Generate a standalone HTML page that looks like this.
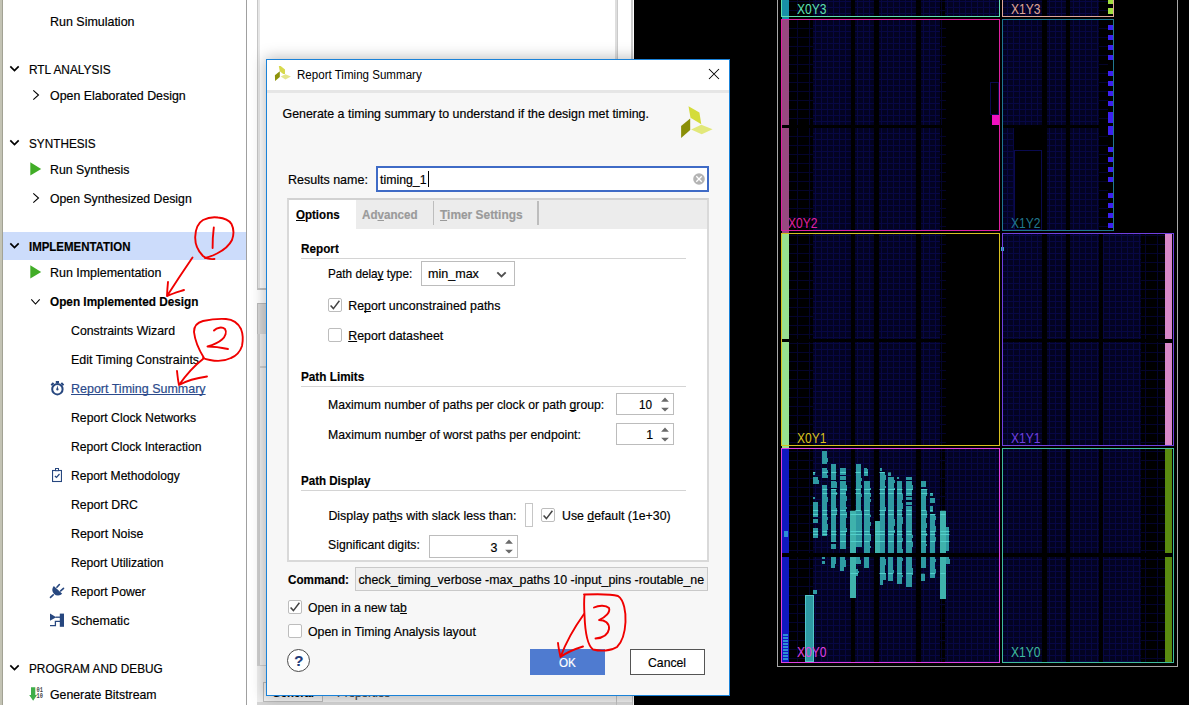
<!DOCTYPE html>
<html><head><meta charset="utf-8"><title>Report Timing Summary</title>
<style>
html,body{margin:0;padding:0}
body{width:1189px;height:705px;overflow:hidden;position:relative;background:#fff;font-family:"Liberation Sans",Arial,sans-serif;}
.t{position:absolute;white-space:nowrap;line-height:16px;-webkit-text-stroke:0.18px currentColor;}
.a{position:absolute}
span.t{text-decoration-skip-ink:none}
u{text-decoration:underline;text-decoration-skip-ink:none;text-underline-offset:1px;text-decoration-thickness:1px}
.cb{position:absolute;width:12px;height:12px;border:1px solid #bdbdbd;border-radius:2px;background:#fff}
.sp{position:absolute;border:1px solid #bcbcbc;background:#fff;box-sizing:border-box}
.hl{position:absolute;height:1px;background:#d4d4d4}
</style></head><body>

<div class="a" style="left:0;top:0;width:2px;height:705px;background:#c3c3b4"></div>
<div class="a" style="left:2px;top:0;width:1px;height:705px;background:#a2a294"></div>
<div class="a" style="left:246px;top:0;width:1px;height:705px;background:#a0a0a0"></div>
<div class="a" style="left:3px;top:232px;width:243px;height:28px;background:#ccdcfb"></div>
<span class="t" style="left:29px;top:62px;font-size:12.4px;font-weight:400;color:#000;transform:scaleX(0.9581);transform-origin:0 0;">RTL ANALYSIS</span>
<svg class="a" style="left:9px;top:64.5px" width="11" height="7" viewBox="-1 -1 11 7"><path d="M0.3 0.3 L4.5 4.5 L8.7 0.3" fill="none" stroke="#000" stroke-width="1.7"/></svg>
<span class="t" style="left:29px;top:136px;font-size:12.4px;font-weight:400;color:#000;transform:scaleX(0.9497);transform-origin:0 0;">SYNTHESIS</span>
<svg class="a" style="left:9px;top:138.5px" width="11" height="7" viewBox="-1 -1 11 7"><path d="M0.3 0.3 L4.5 4.5 L8.7 0.3" fill="none" stroke="#000" stroke-width="1.7"/></svg>
<span class="t" style="left:29px;top:239px;font-size:12.4px;font-weight:700;color:#000;transform:scaleX(0.9246);transform-origin:0 0;">IMPLEMENTATION</span>
<svg class="a" style="left:9px;top:241.5px" width="11" height="7" viewBox="-1 -1 11 7"><path d="M0.3 0.3 L4.5 4.5 L8.7 0.3" fill="none" stroke="#000" stroke-width="1.7"/></svg>
<span class="t" style="left:29px;top:661px;font-size:12.4px;font-weight:400;color:#000;transform:scaleX(0.9519);transform-origin:0 0;">PROGRAM AND DEBUG</span>
<svg class="a" style="left:9px;top:663.5px" width="11" height="7" viewBox="-1 -1 11 7"><path d="M0.3 0.3 L4.5 4.5 L8.7 0.3" fill="none" stroke="#000" stroke-width="1.7"/></svg>
<span class="t" style="left:50px;top:14px;font-size:12.4px;font-weight:400;color:#000;transform:scaleX(1.0056);transform-origin:0 0;">Run Simulation</span>
<span class="t" style="left:50px;top:88px;font-size:12.4px;font-weight:400;color:#000;">Open Elaborated Design</span>
<svg class="a" style="left:31.5px;top:89px" width="8" height="12" viewBox="-1 -1 8 12"><path d="M0.3 0.3 L5.5 5.0 L0.3 9.7" fill="none" stroke="#000" stroke-width="1.1"/></svg>
<span class="t" style="left:50px;top:162px;font-size:12.4px;font-weight:400;color:#000;transform:scaleX(0.9937);transform-origin:0 0;">Run Synthesis</span>
<svg class="a" style="left:30px;top:162px" width="12" height="14" viewBox="0 0 12 14"><path d="M0.3 0.2 L11.2 6.9 L0.3 13.6 Z" fill="#41ad27"/></svg>
<span class="t" style="left:50px;top:191px;font-size:12.4px;font-weight:400;color:#000;transform:scaleX(0.9890);transform-origin:0 0;">Open Synthesized Design</span>
<svg class="a" style="left:31.5px;top:192px" width="8" height="12" viewBox="-1 -1 8 12"><path d="M0.3 0.3 L5.5 5.0 L0.3 9.7" fill="none" stroke="#000" stroke-width="1.1"/></svg>
<span class="t" style="left:50px;top:265px;font-size:12.4px;font-weight:400;color:#000;transform:scaleX(1.0046);transform-origin:0 0;">Run Implementation</span>
<svg class="a" style="left:30px;top:265px" width="12" height="14" viewBox="0 0 12 14"><path d="M0.3 0.2 L11.2 6.9 L0.3 13.6 Z" fill="#41ad27"/></svg>
<span class="t" style="left:50px;top:294px;font-size:12.4px;font-weight:700;color:#000;transform:scaleX(0.9501);transform-origin:0 0;">Open Implemented Design</span>
<svg class="a" style="left:30px;top:298px" width="11" height="7.5" viewBox="-1 -1 11 7.5"><path d="M0.3 0.3 L4.5 5.0 L8.7 0.3" fill="none" stroke="#000" stroke-width="1.1"/></svg>
<span class="t" style="left:50px;top:687px;font-size:12.4px;font-weight:400;color:#000;transform:scaleX(0.9922);transform-origin:0 0;">Generate Bitstream</span>
<span class="t" style="left:71px;top:323px;font-size:12.4px;font-weight:400;color:#000;transform:scaleX(0.9936);transform-origin:0 0;">Constraints Wizard</span>
<span class="t" style="left:71px;top:352px;font-size:12.4px;font-weight:400;color:#000;transform:scaleX(1.0054);transform-origin:0 0;">Edit Timing Constraints</span>
<span class="t" style="left:71px;top:410px;font-size:12.4px;font-weight:400;color:#000;transform:scaleX(0.9873);transform-origin:0 0;">Report Clock Networks</span>
<span class="t" style="left:71px;top:439px;font-size:12.4px;font-weight:400;color:#000;transform:scaleX(0.9818);transform-origin:0 0;">Report Clock Interaction</span>
<span class="t" style="left:71px;top:468px;font-size:12.4px;font-weight:400;color:#000;transform:scaleX(0.9741);transform-origin:0 0;">Report Methodology</span>
<span class="t" style="left:71px;top:497px;font-size:12.4px;font-weight:400;color:#000;transform:scaleX(0.9913);transform-origin:0 0;">Report DRC</span>
<span class="t" style="left:71px;top:526px;font-size:12.4px;font-weight:400;color:#000;">Report Noise</span>
<span class="t" style="left:71px;top:555px;font-size:12.4px;font-weight:400;color:#000;transform:scaleX(0.9792);transform-origin:0 0;">Report Utilization</span>
<span class="t" style="left:71px;top:584px;font-size:12.4px;font-weight:400;color:#000;transform:scaleX(0.9859);transform-origin:0 0;">Report Power</span>
<span class="t" style="left:71px;top:613px;font-size:12.4px;font-weight:400;color:#000;transform:scaleX(1.0093);transform-origin:0 0;">Schematic</span>
<span class="t" style="left:71px;top:381px;font-size:12.4px;font-weight:400;color:#2b4a8b;transform:scaleX(1.0075);transform-origin:0 0;text-decoration:underline;text-underline-offset:1px;text-decoration-thickness:1px;">Report Timing Summary</span>
<svg class="a" style="left:50px;top:381px" width="15" height="15" viewBox="0 0 15 15">
<circle cx="7.4" cy="8.2" r="5.2" fill="none" stroke="#27477f" stroke-width="2"/>
<rect x="5.8" y="0" width="3.2" height="2.2" fill="#27477f"/>
<path d="M0.6 3.6 L2.8 1.2 L4.2 2.6 L2.0 5.0 Z M14.2 3.6 L12.0 1.2 L10.6 2.6 L12.8 5.0 Z" fill="#27477f"/>
<path d="M7.4 4.2 L8.3 8.6 L6.5 8.6 Z" fill="#27477f"/><circle cx="7.4" cy="8.4" r="1.1" fill="#27477f"/>
</svg>
<svg class="a" style="left:51px;top:467px" width="13" height="16" viewBox="0 0 13 16">
<rect x="1.55" y="3.5" width="8.9" height="11" fill="none" stroke="#27477f" stroke-width="1.1"/>
<rect x="4.5" y="1.5" width="3" height="2.2" fill="#fff" stroke="#27477f" stroke-width="1"/>
<path d="M3.9 9.0 L5.5 10.5 L8.5 7.0" fill="none" stroke="#27477f" stroke-width="1.2"/>
</svg>
<svg class="a" style="left:49px;top:583px" width="17" height="16" viewBox="0 0 17 16">
<path d="M4.8 2.9 L13.2 10.7 A5.73 5.73 0 0 1 4.8 2.9 Z" fill="#27477f"/>
<path d="M7.9 4.2 L10.4 1.5 M11.7 7.9 L14.5 5.4" stroke="#27477f" stroke-width="1.6" stroke-linecap="round"/>
<path d="M4.2 11.8 L1.5 14.4" stroke="#27477f" stroke-width="1.6" stroke-linecap="round"/>
</svg>
<svg class="a" style="left:50px;top:613px" width="15" height="15" viewBox="0 0 15 15">
<path d="M0 0.6 L6.2 4.2 L0 7.8 Z" fill="#27477f"/>
<rect x="9.8" y="0.6" width="4.2" height="13.2" fill="#27477f"/>
<path d="M5.6 4.2 H10" stroke="#27477f" stroke-width="1.3" fill="none"/>
<path d="M10 8.4 H5.4 V12.6 H0" stroke="#27477f" stroke-width="1.3" fill="none"/>
</svg>
<svg class="a" style="left:28px;top:686px" width="17" height="16" viewBox="0 0 17 16">
<path d="M3 1.2 H7.3 V9 H9 L5.15 14.8 L1.2 9 H3 Z" fill="#3fae49"/>
<text x="8.6" y="5.6" font-family="Liberation Mono,monospace" font-size="7.6" font-weight="700" fill="#444" textLength="6.4" lengthAdjust="spacingAndGlyphs">01</text>
<text x="8.6" y="11.9" font-family="Liberation Mono,monospace" font-size="7.6" font-weight="700" fill="#444" textLength="6.4" lengthAdjust="spacingAndGlyphs">10</text>
</svg>
<div class="a" style="left:257px;top:0;width:1px;height:705px;background:#c6c6c6"></div>
<div class="a" style="left:258px;top:0;width:2px;height:705px;background:#e6e6e6"></div>
<div class="a" style="left:615px;top:0;width:2px;height:705px;background:#dedede"></div>
<div class="a" style="left:617px;top:0;width:1px;height:705px;background:#cacaca"></div>
<div class="a" style="left:631px;top:0;width:2px;height:705px;background:#cbcbcb"></div>
<div class="a" style="left:257px;top:288px;width:12px;height:2px;background:#c4c4c4"></div>
<div class="a" style="left:257px;top:290px;width:12px;height:13px;background:#fff"></div>
<div class="a" style="left:257px;top:303px;width:12px;height:31px;background:#d8d8d8;border-top:1px solid #bcbcbc;border-left:1px solid #bcbcbc;box-sizing:border-box"></div>
<div class="a" style="left:257px;top:334px;width:3px;height:371px;background:#cfcfcf"></div>
<div class="a" style="left:260px;top:334px;width:8px;height:371px;background:#efefef"></div>
<div class="a" style="left:260px;top:366px;width:8px;height:2px;background:#cfcfcf"></div>
<div class="a" style="left:257px;top:665px;width:10px;height:1px;background:#d0d0d0"></div>
<div class="a" style="left:260px;top:678px;width:4px;height:1px;background:#555"></div>
<div class="a" style="left:257px;top:666px;width:376px;height:39px;background:#efefef"></div>
<div class="a" style="left:257px;top:702px;width:376px;height:3px;background:#d6d6d6"></div>
<div class="a" style="left:263px;top:682px;width:60px;height:20px;box-sizing:border-box;border:1px solid #bdbdbd;background:#f4f4f4"></div>
<span class="t" style="left:272px;top:685px;font-size:12.4px;font-weight:700;color:#000;transform:scaleX(0.9100);transform-origin:0 0;">General</span>
<span class="t" style="left:336.6px;top:685px;font-size:12.4px;font-weight:400;color:#444;transform:scaleX(0.9383);transform-origin:0 0;">Properties</span>
<div class="a" style="left:616px;top:690px;width:1px;height:15px;background:#c0c0c0"></div>
<div class="a" style="left:632px;top:690px;width:1px;height:15px;background:#c0c0c0"></div>
<svg class="a" style="left:634px;top:0" width="555" height="705" viewBox="634 0 555 705" shape-rendering="crispEdges">
<defs>
<pattern id="g" x="5" y="1" width="6" height="6" patternUnits="userSpaceOnUse"><rect width="6" height="6" fill="#030322"/><rect width="1" height="6" fill="#070744"/><rect width="6" height="1" fill="#070744"/></pattern>
<pattern id="gd" x="5" y="1" width="12" height="9" patternUnits="userSpaceOnUse"><rect width="12" height="9" fill="#000"/><rect width="1" height="9" fill="#04042c"/><rect width="12" height="1" fill="#04042c"/></pattern>
</defs>
<rect x="634" y="0" width="555" height="705" fill="#000"/>
<path d="M777.5 0 V666.5 H1177.5 V0" fill="none" stroke="#a8a8a8" stroke-width="1"/>
<rect x="789" y="0" width="24" height="17" fill="url(#gd)"/>
<rect x="940" y="0" width="6" height="17" fill="url(#gd)"/>
<rect x="813" y="0" width="38" height="17" fill="url(#g)"/>
<rect x="855" y="0" width="19" height="17" fill="url(#g)"/>
<rect x="879" y="0" width="36.5" height="17" fill="url(#g)"/>
<rect x="921" y="0" width="19" height="17" fill="url(#g)"/>
<rect x="945" y="0" width="54" height="17" fill="url(#g)"/>
<rect x="1003" y="0" width="39" height="17" fill="url(#g)"/>
<rect x="1047" y="0" width="19" height="17" fill="url(#g)"/>
<rect x="1070" y="0" width="28.5" height="17" fill="url(#g)"/>
<rect x="1098.5" y="0" width="9.5" height="17" fill="url(#gd)"/>
<rect x="789" y="20" width="24" height="105" fill="url(#gd)"/>
<rect x="940" y="20" width="6" height="105" fill="url(#gd)"/>
<rect x="813" y="20" width="38" height="105" fill="url(#g)"/>
<rect x="855" y="20" width="19" height="105" fill="url(#g)"/>
<rect x="879" y="20" width="36.5" height="105" fill="url(#g)"/>
<rect x="921" y="20" width="19" height="105" fill="url(#g)"/>
<rect x="1003" y="20" width="39" height="105" fill="url(#g)"/>
<rect x="1047" y="20" width="19" height="105" fill="url(#g)"/>
<rect x="1070" y="20" width="28.5" height="105" fill="url(#g)"/>
<rect x="1098.5" y="20" width="9.5" height="105" fill="url(#gd)"/>
<rect x="789" y="128" width="24" height="102" fill="url(#gd)"/>
<rect x="940" y="128" width="6" height="102" fill="url(#gd)"/>
<rect x="813" y="128" width="38" height="102" fill="url(#g)"/>
<rect x="855" y="128" width="19" height="102" fill="url(#g)"/>
<rect x="879" y="128" width="36.5" height="102" fill="url(#g)"/>
<rect x="921" y="128" width="19" height="102" fill="url(#g)"/>
<rect x="1003" y="128" width="11" height="102" fill="url(#g)"/>
<rect x="1047" y="128" width="19" height="102" fill="url(#g)"/>
<rect x="1070" y="128" width="28.5" height="102" fill="url(#g)"/>
<rect x="1098.5" y="128" width="9.5" height="102" fill="url(#gd)"/>
<rect x="789" y="234" width="24" height="105" fill="url(#gd)"/>
<rect x="940" y="234" width="6" height="105" fill="url(#gd)"/>
<rect x="813" y="234" width="38" height="105" fill="url(#g)"/>
<rect x="855" y="234" width="19" height="105" fill="url(#g)"/>
<rect x="879" y="234" width="36.5" height="105" fill="url(#g)"/>
<rect x="921" y="234" width="19" height="105" fill="url(#g)"/>
<rect x="1003" y="234" width="39" height="105" fill="url(#g)"/>
<rect x="1047" y="234" width="19" height="105" fill="url(#g)"/>
<rect x="1070" y="234" width="28.5" height="105" fill="url(#g)"/>
<rect x="1103" y="234" width="37.5" height="105" fill="url(#g)"/>
<rect x="1141" y="234" width="24" height="105" fill="url(#gd)"/>
<rect x="789" y="342" width="24" height="103" fill="url(#gd)"/>
<rect x="940" y="342" width="6" height="103" fill="url(#gd)"/>
<rect x="813" y="342" width="38" height="103" fill="url(#g)"/>
<rect x="855" y="342" width="19" height="103" fill="url(#g)"/>
<rect x="879" y="342" width="36.5" height="103" fill="url(#g)"/>
<rect x="921" y="342" width="19" height="103" fill="url(#g)"/>
<rect x="1003" y="342" width="39" height="103" fill="url(#g)"/>
<rect x="1047" y="342" width="19" height="103" fill="url(#g)"/>
<rect x="1070" y="342" width="28.5" height="103" fill="url(#g)"/>
<rect x="1103" y="342" width="37.5" height="103" fill="url(#g)"/>
<rect x="1141" y="342" width="24" height="103" fill="url(#gd)"/>
<rect x="789" y="449" width="24" height="104" fill="url(#gd)"/>
<rect x="940" y="449" width="6" height="104" fill="url(#gd)"/>
<rect x="813" y="449" width="38" height="104" fill="url(#g)"/>
<rect x="855" y="449" width="19" height="104" fill="url(#g)"/>
<rect x="879" y="449" width="36.5" height="104" fill="url(#g)"/>
<rect x="921" y="449" width="19" height="104" fill="url(#g)"/>
<rect x="945" y="449" width="54" height="104" fill="url(#g)"/>
<rect x="1003" y="449" width="39" height="104" fill="url(#g)"/>
<rect x="1047" y="449" width="19" height="104" fill="url(#g)"/>
<rect x="1070" y="449" width="28.5" height="104" fill="url(#g)"/>
<rect x="1103" y="449" width="37.5" height="104" fill="url(#g)"/>
<rect x="1141" y="449" width="24" height="104" fill="url(#gd)"/>
<rect x="789" y="557" width="24" height="105" fill="url(#gd)"/>
<rect x="940" y="557" width="6" height="105" fill="url(#gd)"/>
<rect x="813" y="557" width="38" height="105" fill="url(#g)"/>
<rect x="855" y="557" width="19" height="105" fill="url(#g)"/>
<rect x="879" y="557" width="36.5" height="105" fill="url(#g)"/>
<rect x="921" y="557" width="19" height="105" fill="url(#g)"/>
<rect x="945" y="557" width="54" height="105" fill="url(#g)"/>
<rect x="1003" y="557" width="39" height="105" fill="url(#g)"/>
<rect x="1047" y="557" width="19" height="105" fill="url(#g)"/>
<rect x="1070" y="557" width="28.5" height="105" fill="url(#g)"/>
<rect x="1103" y="557" width="37.5" height="105" fill="url(#g)"/>
<rect x="1141" y="557" width="24" height="105" fill="url(#gd)"/>
<rect x="1014.5" y="150.5" width="27" height="79" fill="#000" stroke="#0a0a50"/>
<rect x="990.5" y="82.5" width="8" height="32" fill="none" stroke="#0a0a50"/>
<rect x="782" y="0" width="7" height="19" fill="#1890a8"/>
<rect x="782" y="20" width="7" height="105" fill="#984880"/>
<rect x="782" y="128" width="7" height="105" fill="#984880"/>
<rect x="782" y="234" width="7" height="105" fill="#98e090"/>
<rect x="782" y="342" width="7" height="106" fill="#98e090"/>
<rect x="782" y="449" width="7" height="104" fill="#1018c0"/>
<rect x="782" y="557" width="7" height="105" fill="#1018c0"/>
<rect x="1108" y="0" width="5" height="4" fill="#a0e040"/>
<rect x="1108" y="8" width="5" height="6" fill="#a0e040"/>
<rect x="1108" y="25" width="5" height="5" fill="#3c20f0"/>
<rect x="1108" y="35" width="5" height="5" fill="#3c20f0"/>
<rect x="1108" y="45" width="5" height="5" fill="#3c20f0"/>
<rect x="1108" y="55" width="5" height="5" fill="#3c20f0"/>
<rect x="1108" y="71" width="5" height="5" fill="#3c20f0"/>
<rect x="1108" y="81" width="5" height="5" fill="#3c20f0"/>
<rect x="1108" y="91" width="5" height="5" fill="#3c20f0"/>
<rect x="1108" y="101" width="5" height="5" fill="#3c20f0"/>
<rect x="1108" y="112" width="5" height="11" fill="#3c20f0"/>
<rect x="1108" y="126" width="5" height="9" fill="#3c20f0"/>
<rect x="1108" y="147" width="5" height="5" fill="#3c20f0"/>
<rect x="1108" y="157" width="5" height="5" fill="#3c20f0"/>
<rect x="1108" y="167" width="5" height="5" fill="#3c20f0"/>
<rect x="1108" y="177" width="5" height="5" fill="#3c20f0"/>
<rect x="1108" y="193" width="5" height="5" fill="#3c20f0"/>
<rect x="1108" y="203" width="5" height="5" fill="#3c20f0"/>
<rect x="1108" y="213" width="5" height="5" fill="#3c20f0"/>
<rect x="1108" y="223" width="5" height="5" fill="#3c20f0"/>
<rect x="1165" y="234" width="7" height="105" fill="#d888c8"/>
<rect x="1165" y="343" width="7" height="102" fill="#d888c8"/>
<rect x="1165" y="449" width="7" height="104" fill="#5a8a10"/>
<rect x="1165" y="557" width="7" height="105" fill="#5a8a10"/>
<rect x="992" y="115" width="7" height="10" fill="#f010c0"/>
<rect x="1001" y="247" width="3" height="4" fill="#30b0c0"/>
<rect x="783" y="634" width="5" height="2" fill="#2c8cd8"/>
<rect x="783" y="637" width="5" height="2" fill="#2c8cd8"/>
<rect x="783" y="640" width="5" height="2" fill="#2c8cd8"/>
<rect x="783" y="643" width="5" height="2" fill="#2c8cd8"/>
<rect x="783" y="646" width="5" height="2" fill="#2c8cd8"/>
<rect x="783" y="649" width="5" height="2" fill="#2c8cd8"/>
<rect x="783" y="652" width="5" height="2" fill="#2c8cd8"/>
<rect x="783" y="655" width="5" height="2" fill="#2c8cd8"/>
<rect x="783" y="658" width="5" height="2" fill="#2c8cd8"/>
<rect x="784" y="531" width="4" height="6" fill="#2c8cd8"/>
<path d="M822.4 451.1H827.4V463.9H822.4ZM822.4 468.3H827.4V478.3H822.4ZM822.4 485.0H827.4V535.7H822.4ZM812.8 477.3H818.2V484.0H812.8ZM812.8 502.2H818.2V516.6H812.8ZM812.8 518.5H818.2V523.3H812.8ZM812.8 528.1H818.2V537.6H812.8ZM812.8 471.6H815.3V475.4H812.8ZM812.8 497.4H815.3V499.4H812.8ZM831.2 463.9H836.4V480.2H831.2ZM831.2 481.2H836.4V487.9H831.2ZM831.2 488.8H836.4V541.5H831.2ZM831.2 544.3H836.4V549.1H831.2ZM840.2 468.3H846.0V474.5H840.2ZM840.2 476.4H846.0V480.2H840.2ZM840.2 481.2H846.0V549.1H840.2ZM855.5 463.9H860.7V510.8H855.5ZM855.5 510.8H862.2V547.2H855.5ZM864.2 481.2H869.5V553.0H864.2ZM864.2 468.3H867.0V476.4H864.2ZM879.5 471.6H884.8V553.0H879.5ZM879.5 468.3H882.3V470.6H879.5ZM888.1 477.3H893.8V553.0H888.1ZM888.1 472.5H891.0V476.4H888.1ZM897.1 481.2H902.4V553.0H897.1ZM897.1 477.3H899.0V479.2H897.1ZM906.3 477.3H911.6V480.2H906.3ZM906.3 481.2H911.6V495.5H906.3ZM906.3 497.4H911.6V500.3H906.3ZM906.3 502.2H911.6V505.1H906.3ZM906.3 506.1H911.6V553.0H906.3ZM921.2 481.2H926.4V486.9H921.2ZM921.2 488.8H926.4V553.0H921.2ZM930.2 498.4H935.4V503.2H930.2ZM930.2 513.7H935.4V553.0H930.2ZM930.2 493.2H932.7V495.5H930.2ZM930.2 506.1H932.7V511.8H930.2ZM945.5 527.1H949.4V551.0H945.5ZM822.4 556.5H824.9V559.4H822.4ZM822.4 560.7H824.9V563.8H822.4ZM831.2 556.5H836.4V564.1H831.2ZM831.2 564.1H834.5V568.0H831.2ZM840.2 556.5H845.4V567.0H840.2ZM840.2 567.0H844.1V570.8H840.2ZM855.5 556.5H860.3V564.1H855.5ZM855.5 568.9H858.0V575.6H855.5ZM864.2 556.5H868.9V568.0H864.2ZM879.5 556.5H884.8V580.4H879.5ZM879.5 580.4H882.9V585.2H879.5ZM888.1 556.5H892.9V581.4H888.1ZM897.1 556.5H902.4V584.2H897.1ZM906.3 556.5H911.6V587.1H906.3ZM921.2 556.5H926.4V568.0H921.2ZM921.2 573.7H924.5V581.4H921.2ZM930.2 556.5H935.4V577.5H930.2ZM945.5 556.5H949.4V564.1H945.5ZM805.4 595.2H813.8V661.4H805.4ZM813.0 590.0H817.2V593.8H813.0ZM827.4 457.7H828.4V462.3H827.4ZM827.4 470.4H828.4V472.6H827.4ZM827.4 475.0H828.4V477.5H827.4ZM827.4 497.2H828.4V502.1H827.4ZM827.4 517.2H828.4V519.9H827.4ZM827.4 524.1H828.4V530.2H827.4ZM818.2 479.9H819.2V483.8H818.2ZM836.4 482.3H837.4V487.9H836.4ZM836.4 491.9H837.4V494.6H836.4ZM836.4 508.2H837.4V514.6H836.4ZM846.0 485.1H847.0V491.2H846.0ZM846.0 495.9H847.0V501.3H846.0ZM846.0 506.5H847.0V509.4H846.0ZM846.0 511.8H847.0V517.6H846.0ZM846.0 527.9H847.0V532.1H846.0ZM860.7 478.1H861.7V480.8H860.7ZM860.7 484.5H861.7V487.6H860.7ZM860.7 493.8H861.7V497.1H860.7ZM869.5 487.7H870.5V490.1H869.5ZM869.5 493.2H870.5V496.9H869.5ZM869.5 498.9H870.5V501.6H869.5ZM869.5 514.6H870.5V517.4H869.5ZM869.5 521.8H870.5V525.6H869.5ZM869.5 533.6H870.5V540.5H869.5ZM869.5 545.9H870.5V548.3H869.5ZM867.0 469.4H868.0V475.5H867.0ZM884.8 475.4H885.8V480.0H884.8ZM884.8 485.8H885.8V488.0H884.8ZM884.8 507.0H885.8V510.8H884.8ZM893.8 480.3H894.8V483.4H893.8ZM893.8 487.9H894.8V490.1H893.8ZM893.8 519.2H894.8V525.9H893.8ZM893.8 529.5H894.8V532.6H893.8ZM902.4 494.3H903.4V500.0H902.4ZM902.4 503.3H903.4V509.2H902.4ZM902.4 516.8H903.4V523.7H902.4ZM902.4 538.4H903.4V541.1H902.4ZM902.4 549.4H903.4V553.0H902.4ZM911.6 485.1H912.6V490.4H911.6ZM911.6 534.7H912.6V538.0H911.6ZM911.6 541.6H912.6V546.6H911.6ZM926.4 489.3H927.4V495.9H926.4ZM926.4 511.0H927.4V517.6H926.4ZM926.4 523.3H927.4V527.9H926.4ZM926.4 533.0H927.4V535.9H926.4ZM926.4 543.5H927.4V546.3H926.4ZM935.4 515.9H936.4V519.6H935.4ZM935.4 525.5H936.4V531.4H935.4ZM935.4 537.3H936.4V540.5H935.4ZM845.4 560.0H846.4V566.7H845.4ZM860.3 560.3H861.3V564.1H860.3ZM858.0 570.7H859.0V573.1H858.0ZM884.8 559.4H885.8V564.7H884.8ZM884.8 572.8H885.8V579.7H884.8ZM892.9 570.3H893.9V573.2H892.9ZM902.4 557.8H903.4V560.8H902.4ZM902.4 575.1H903.4V577.1H902.4ZM911.6 568.4H912.6V575.2H911.6ZM935.4 559.3H936.4V561.7H935.4ZM935.4 568.6H936.4V572.7H935.4ZM949.4 559.0H950.4V564.1H949.4Z" fill="#2e9aa2"/>
<path d="M850.4 510.8H855.5V553.0H850.4ZM875.3 521.4H879.5V553.0H875.3ZM940.4 510.8H945.5V553.0H940.4ZM850.4 557.4H855.5V598.2H850.4ZM940.4 557.4H945.5V598.6H940.4Z" fill="#3fb2ac"/>
<clipPath id="cb"><path d="M822.4 451.1H827.4V463.9H822.4ZM822.4 468.3H827.4V478.3H822.4ZM822.4 485.0H827.4V535.7H822.4ZM812.8 477.3H818.2V484.0H812.8ZM812.8 502.2H818.2V516.6H812.8ZM812.8 518.5H818.2V523.3H812.8ZM812.8 528.1H818.2V537.6H812.8ZM812.8 471.6H815.3V475.4H812.8ZM812.8 497.4H815.3V499.4H812.8ZM831.2 463.9H836.4V480.2H831.2ZM831.2 481.2H836.4V487.9H831.2ZM831.2 488.8H836.4V541.5H831.2ZM831.2 544.3H836.4V549.1H831.2ZM840.2 468.3H846.0V474.5H840.2ZM840.2 476.4H846.0V480.2H840.2ZM840.2 481.2H846.0V549.1H840.2ZM855.5 463.9H860.7V510.8H855.5ZM855.5 510.8H862.2V547.2H855.5ZM864.2 481.2H869.5V553.0H864.2ZM864.2 468.3H867.0V476.4H864.2ZM879.5 471.6H884.8V553.0H879.5ZM879.5 468.3H882.3V470.6H879.5ZM888.1 477.3H893.8V553.0H888.1ZM888.1 472.5H891.0V476.4H888.1ZM897.1 481.2H902.4V553.0H897.1ZM897.1 477.3H899.0V479.2H897.1ZM906.3 477.3H911.6V480.2H906.3ZM906.3 481.2H911.6V495.5H906.3ZM906.3 497.4H911.6V500.3H906.3ZM906.3 502.2H911.6V505.1H906.3ZM906.3 506.1H911.6V553.0H906.3ZM921.2 481.2H926.4V486.9H921.2ZM921.2 488.8H926.4V553.0H921.2ZM930.2 498.4H935.4V503.2H930.2ZM930.2 513.7H935.4V553.0H930.2ZM930.2 493.2H932.7V495.5H930.2ZM930.2 506.1H932.7V511.8H930.2ZM945.5 527.1H949.4V551.0H945.5ZM822.4 556.5H824.9V559.4H822.4ZM822.4 560.7H824.9V563.8H822.4ZM831.2 556.5H836.4V564.1H831.2ZM831.2 564.1H834.5V568.0H831.2ZM840.2 556.5H845.4V567.0H840.2ZM840.2 567.0H844.1V570.8H840.2ZM855.5 556.5H860.3V564.1H855.5ZM855.5 568.9H858.0V575.6H855.5ZM864.2 556.5H868.9V568.0H864.2ZM879.5 556.5H884.8V580.4H879.5ZM879.5 580.4H882.9V585.2H879.5ZM888.1 556.5H892.9V581.4H888.1ZM897.1 556.5H902.4V584.2H897.1ZM906.3 556.5H911.6V587.1H906.3ZM921.2 556.5H926.4V568.0H921.2ZM921.2 573.7H924.5V581.4H921.2ZM930.2 556.5H935.4V577.5H930.2ZM945.5 556.5H949.4V564.1H945.5ZM805.4 595.2H813.8V661.4H805.4ZM813.0 590.0H817.2V593.8H813.0ZM827.4 457.7H828.4V462.3H827.4ZM827.4 470.4H828.4V472.6H827.4ZM827.4 475.0H828.4V477.5H827.4ZM827.4 497.2H828.4V502.1H827.4ZM827.4 517.2H828.4V519.9H827.4ZM827.4 524.1H828.4V530.2H827.4ZM818.2 479.9H819.2V483.8H818.2ZM836.4 482.3H837.4V487.9H836.4ZM836.4 491.9H837.4V494.6H836.4ZM836.4 508.2H837.4V514.6H836.4ZM846.0 485.1H847.0V491.2H846.0ZM846.0 495.9H847.0V501.3H846.0ZM846.0 506.5H847.0V509.4H846.0ZM846.0 511.8H847.0V517.6H846.0ZM846.0 527.9H847.0V532.1H846.0ZM860.7 478.1H861.7V480.8H860.7ZM860.7 484.5H861.7V487.6H860.7ZM860.7 493.8H861.7V497.1H860.7ZM869.5 487.7H870.5V490.1H869.5ZM869.5 493.2H870.5V496.9H869.5ZM869.5 498.9H870.5V501.6H869.5ZM869.5 514.6H870.5V517.4H869.5ZM869.5 521.8H870.5V525.6H869.5ZM869.5 533.6H870.5V540.5H869.5ZM869.5 545.9H870.5V548.3H869.5ZM867.0 469.4H868.0V475.5H867.0ZM884.8 475.4H885.8V480.0H884.8ZM884.8 485.8H885.8V488.0H884.8ZM884.8 507.0H885.8V510.8H884.8ZM893.8 480.3H894.8V483.4H893.8ZM893.8 487.9H894.8V490.1H893.8ZM893.8 519.2H894.8V525.9H893.8ZM893.8 529.5H894.8V532.6H893.8ZM902.4 494.3H903.4V500.0H902.4ZM902.4 503.3H903.4V509.2H902.4ZM902.4 516.8H903.4V523.7H902.4ZM902.4 538.4H903.4V541.1H902.4ZM902.4 549.4H903.4V553.0H902.4ZM911.6 485.1H912.6V490.4H911.6ZM911.6 534.7H912.6V538.0H911.6ZM911.6 541.6H912.6V546.6H911.6ZM926.4 489.3H927.4V495.9H926.4ZM926.4 511.0H927.4V517.6H926.4ZM926.4 523.3H927.4V527.9H926.4ZM926.4 533.0H927.4V535.9H926.4ZM926.4 543.5H927.4V546.3H926.4ZM935.4 515.9H936.4V519.6H935.4ZM935.4 525.5H936.4V531.4H935.4ZM935.4 537.3H936.4V540.5H935.4ZM845.4 560.0H846.4V566.7H845.4ZM860.3 560.3H861.3V564.1H860.3ZM858.0 570.7H859.0V573.1H858.0ZM884.8 559.4H885.8V564.7H884.8ZM884.8 572.8H885.8V579.7H884.8ZM892.9 570.3H893.9V573.2H892.9ZM902.4 557.8H903.4V560.8H902.4ZM902.4 575.1H903.4V577.1H902.4ZM911.6 568.4H912.6V575.2H911.6ZM935.4 559.3H936.4V561.7H935.4ZM935.4 568.6H936.4V572.7H935.4ZM949.4 559.0H950.4V564.1H949.4ZM850.4 510.8H855.5V553.0H850.4ZM875.3 521.4H879.5V553.0H875.3ZM940.4 510.8H945.5V553.0H940.4ZM850.4 557.4H855.5V598.2H850.4ZM940.4 557.4H945.5V598.6H940.4Z"/></clipPath>
<path d="M813 472.5H952M813 489.5H952M813 493.5H952M813 510.5H952M813 514.5H952M813 531.5H952M813 534.5H952M813 541.5H952M813 573.5H952" stroke="#52d0cc" stroke-width="1" clip-path="url(#cb)" fill="none"/>
<rect x="805.5" y="595.5" width="8" height="66" fill="none" stroke="#52c8c8"/>
<rect x="781.5" y="-4.5" width="218" height="21" fill="none" stroke="#5fe0b0"/>
<rect x="1002.5" y="-4.5" width="111" height="21" fill="none" stroke="#e0a898"/>
<rect x="781.5" y="19.5" width="218" height="211" fill="none" stroke="#e020a0"/>
<rect x="1002.5" y="19.5" width="111" height="211" fill="none" stroke="#207890"/>
<rect x="781.5" y="233.5" width="218" height="212" fill="none" stroke="#d8c020"/>
<rect x="1002.5" y="233.5" width="171" height="212" fill="none" stroke="#7040e0"/>
<rect x="781.5" y="448.5" width="218" height="214" fill="none" stroke="#e040e0"/>
<rect x="1002.5" y="448.5" width="171" height="214" fill="none" stroke="#3fbc9c"/>
<text x="797" y="14" font-family="Liberation Sans,Arial,sans-serif" font-size="14.4" fill="#5fe0b0" textLength="29.5" lengthAdjust="spacingAndGlyphs" shape-rendering="auto">X0Y3</text>
<text x="1011" y="14" font-family="Liberation Sans,Arial,sans-serif" font-size="14.4" fill="#e0a898" textLength="29.5" lengthAdjust="spacingAndGlyphs" shape-rendering="auto">X1Y3</text>
<text x="788" y="228" font-family="Liberation Sans,Arial,sans-serif" font-size="14.4" fill="#e020a0" textLength="29.5" lengthAdjust="spacingAndGlyphs" shape-rendering="auto">X0Y2</text>
<text x="1011" y="228" font-family="Liberation Sans,Arial,sans-serif" font-size="14.4" fill="#207890" textLength="29.5" lengthAdjust="spacingAndGlyphs" shape-rendering="auto">X1Y2</text>
<text x="797" y="443" font-family="Liberation Sans,Arial,sans-serif" font-size="14.4" fill="#d8c020" textLength="29.5" lengthAdjust="spacingAndGlyphs" shape-rendering="auto">X0Y1</text>
<text x="1011" y="443" font-family="Liberation Sans,Arial,sans-serif" font-size="14.4" fill="#7040e0" textLength="29.5" lengthAdjust="spacingAndGlyphs" shape-rendering="auto">X1Y1</text>
<text x="797" y="657" font-family="Liberation Sans,Arial,sans-serif" font-size="14.4" fill="#e040e0" textLength="29.5" lengthAdjust="spacingAndGlyphs" shape-rendering="auto">X0Y0</text>
<text x="1011" y="657" font-family="Liberation Sans,Arial,sans-serif" font-size="14.4" fill="#3fbc9c" textLength="29.5" lengthAdjust="spacingAndGlyphs" shape-rendering="auto">X1Y0</text>
</svg>
<div class="a" style="left:266px;top:59px;width:464px;height:637px;box-sizing:border-box;border:1px solid #1a82d8;background:#f7f7f7;box-shadow:0 0 14px 1px rgba(0,0,0,0.27)"></div>
<div class="a" style="left:267px;top:60px;width:462px;height:30px;background:#fff"></div>
<div class="a" style="left:267px;top:90px;width:462px;height:3px;background:#e6e6e6"></div>
<svg class="a" style="left:273px;top:64px" width="20" height="19" viewBox="273 64 20 19">
<path d="M278.8 65.9 L280.6 66.0 L285 69.4 L285 74.1 L283.2 74.0 L279.8 71.2 Z" fill="#d7d94c"/>
<path d="M274.9 75.3 L279.8 71.2 L279.8 76.9 L275.1 81.1 Z" fill="#8e930b"/>
<path d="M280.7 76.6 L285.4 74.3 L290.9 76.6 L285.4 79.5 Z" fill="#e4e68c"/>
</svg>
<span class="t" style="left:296.7px;top:67px;font-size:12px;font-weight:400;color:#000;transform:scaleX(0.9639);transform-origin:0 0;-webkit-text-stroke:0;">Report Timing Summary</span>
<svg class="a" style="left:708px;top:68px" width="12" height="12" viewBox="0 0 12 12"><path d="M1 1 L11 11 M11 1 L1 11" stroke="#000" stroke-width="1.05" fill="none"/></svg>
<span class="t" style="left:282.5px;top:106px;font-size:12.4px;font-weight:400;color:#000;">Generate a timing summary to understand if the design met timing.</span>
<svg class="a" style="left:678px;top:103px" width="38" height="38" viewBox="678 103 38 38">
<path d="M688.5 106.3 L699.4 112.4 L701.3 124.2 L690.5 117.8 Z" fill="#d4dc3a"/>
<path d="M681.1 126.1 L690.2 118.4 L690.2 129.9 L681.1 138 Z" fill="#8a8f08"/>
<path d="M691.1 129.5 L701.3 124.8 L712.6 129.3 L701.7 134.3 Z" fill="#e2e87a"/>
</svg>
<span class="t" style="left:288.4px;top:172px;font-size:12.4px;font-weight:400;color:#000;transform:scaleX(1.0088);transform-origin:0 0;">Results name:</span>
<div class="a" style="left:376px;top:166px;width:333px;height:26px;box-sizing:border-box;border:2px solid #3f6bc6;background:#fff"></div>
<span class="t" style="left:380.1px;top:172px;font-size:12.4px;font-weight:400;color:#000;transform:scaleX(0.9927);transform-origin:0 0;">timing_1</span>
<div class="a" style="left:428px;top:171px;width:1px;height:16px;background:#000"></div>
<svg class="a" style="left:693px;top:173px" width="12" height="12" viewBox="0 0 12 12"><circle cx="6" cy="6" r="5.8" fill="#b4b4b4"/><path d="M3.3 3.3 L8.7 8.7 M8.7 3.3 L3.3 8.7" stroke="#fff" stroke-width="1.3"/></svg>
<div class="a" style="left:287px;top:198px;width:422px;height:364px;box-sizing:border-box;border:2px solid #d9d9d9;border-top-color:#d2d2d2;background:#fff"></div>
<div class="a" style="left:356px;top:200px;width:351px;height:29px;background:#ececec"></div>
<div class="a" style="left:433px;top:201px;width:1px;height:24px;background:#bdbdbd"></div>
<div class="a" style="left:537px;top:201px;width:2px;height:24px;background:#bdbdbd"></div>
<span class="t" style="left:296px;top:207px;font-size:12.4px;font-weight:700;color:#000;transform:scaleX(0.9314);transform-origin:0 0;"><u>O</u>ptions</span>
<span class="t" style="left:362px;top:207px;font-size:12.4px;font-weight:700;color:#9a9a9a;transform:scaleX(0.9367);transform-origin:0 0;">Ad<u>v</u>anced</span>
<span class="t" style="left:440.2px;top:207px;font-size:12.4px;font-weight:700;color:#9a9a9a;transform:scaleX(0.9620);transform-origin:0 0;"><u>T</u>imer Settings</span>
<span class="t" style="left:301.1px;top:241px;font-size:12.4px;font-weight:700;color:#000;transform:scaleX(0.9465);transform-origin:0 0;">Report</span>
<div class="hl" style="left:301px;top:258px;width:385px"></div>
<span class="t" style="left:328px;top:266px;font-size:12.4px;font-weight:400;color:#000;transform:scaleX(0.9474);transform-origin:0 0;">Path dela<u>y</u> type:</span>
<div class="sp" style="left:421px;top:261px;width:94px;height:25px"></div>
<span class="t" style="left:428.3px;top:266px;font-size:12.4px;font-weight:400;color:#000;transform:scaleX(1.0126);transform-origin:0 0;">min_max</span>
<svg class="a" style="left:496px;top:270.5px" width="11" height="7" viewBox="-1 -1 11 7"><path d="M0.3 0.3 L4.5 4.5 L8.7 0.3" fill="none" stroke="#505050" stroke-width="1.9"/></svg>
<div class="cb" style="left:328px;top:298px"></div><svg class="a" style="left:328px;top:298px" width="14" height="14" viewBox="0 0 14 14"><path d="M2.6 7.4 L5.4 10.6 L11.4 2.8" fill="none" stroke="#444" stroke-width="1.5"/></svg>
<span class="t" style="left:348.2px;top:298px;font-size:12.4px;font-weight:400;color:#000;">Re<u>p</u>ort unconstrained paths</span>
<div class="cb" style="left:328px;top:328px"></div>
<span class="t" style="left:348.2px;top:328px;font-size:12.4px;font-weight:400;color:#000;"><u>R</u>eport datasheet</span>
<span class="t" style="left:301px;top:369px;font-size:12.4px;font-weight:700;color:#000;transform:scaleX(0.9479);transform-origin:0 0;">Path Limits</span>
<div class="hl" style="left:301px;top:386px;width:385px"></div>
<span class="t" style="left:328.4px;top:397px;font-size:12.4px;font-weight:400;color:#000;transform:scaleX(0.9853);transform-origin:0 0;">Maximum number of paths per clock or path <u>g</u>roup:</span>
<span class="t" style="left:328.4px;top:427px;font-size:12.4px;font-weight:400;color:#000;transform:scaleX(0.9897);transform-origin:0 0;">Maximum numb<u>e</u>r of worst paths per endpoint:</span>
<div class="sp" style="left:616px;top:393px;width:58px;height:22px"></div><span class="t" style="left:639.3px;top:397px;font-size:12.4px;font-weight:400;color:#000;transform:scaleX(0.9495);transform-origin:0 0;">10</span><svg class="a" style="left:661.3px;top:396.5px" width="8" height="15" viewBox="0 0 8 15"><path d="M0.1 4.8 L4 0.6 L7.9 4.8 Z M0.1 10.8 L4 14.5 L7.9 10.8 Z" fill="#6a6a6a"/></svg>
<div class="sp" style="left:616px;top:423px;width:58px;height:22px"></div><span class="t" style="left:646.2px;top:427px;font-size:12.4px;font-weight:400;color:#000;">1</span><svg class="a" style="left:661.3px;top:426.5px" width="8" height="15" viewBox="0 0 8 15"><path d="M0.1 4.8 L4 0.6 L7.9 4.8 Z M0.1 10.8 L4 14.5 L7.9 10.8 Z" fill="#6a6a6a"/></svg>
<span class="t" style="left:301px;top:473px;font-size:12.4px;font-weight:700;color:#000;transform:scaleX(0.9331);transform-origin:0 0;">Path Display</span>
<div class="hl" style="left:301px;top:490px;width:385px"></div>
<span class="t" style="left:328.4px;top:508px;font-size:12.4px;font-weight:400;color:#000;">Display pat<u>h</u>s with slack less than:</span>
<div class="sp" style="left:525px;top:503px;width:8px;height:24px;border-color:#c6c6c6"></div>
<div class="cb" style="left:541px;top:508px"></div><svg class="a" style="left:541px;top:508px" width="14" height="14" viewBox="0 0 14 14"><path d="M2.6 7.4 L5.4 10.6 L11.4 2.8" fill="none" stroke="#444" stroke-width="1.5"/></svg>
<span class="t" style="left:561.6px;top:508px;font-size:12.4px;font-weight:400;color:#000;transform:scaleX(0.9945);transform-origin:0 0;">Use <u>d</u>efault (1e+30)</span>
<span class="t" style="left:328.4px;top:537px;font-size:12.4px;font-weight:400;color:#000;transform:scaleX(0.9873);transform-origin:0 0;">Significant digits:</span>
<div class="sp" style="left:429px;top:535px;width:89px;height:23px"></div><span class="t" style="left:490.6px;top:540px;font-size:12.4px;font-weight:400;color:#000;">3</span><svg class="a" style="left:505.3px;top:539.0px" width="8" height="15" viewBox="0 0 8 15"><path d="M0.1 4.8 L4 0.6 L7.9 4.8 Z M0.1 10.8 L4 14.5 L7.9 10.8 Z" fill="#6a6a6a"/></svg>
<span class="t" style="left:288.1px;top:572px;font-size:12.4px;font-weight:700;color:#000;transform:scaleX(0.9410);transform-origin:0 0;">Command:</span>
<div class="a" style="left:355px;top:567px;width:353px;height:24px;box-sizing:border-box;border:1px solid #c9c9c9;background:#efefef"></div>
<span class="t" style="left:358.4px;top:572px;font-size:12.4px;font-weight:400;color:#000;">check_timing_verbose -max_paths 10 -input_pins -routable_ne</span>
<div class="cb" style="left:288px;top:600px"></div><svg class="a" style="left:288px;top:600px" width="14" height="14" viewBox="0 0 14 14"><path d="M2.6 7.4 L5.4 10.6 L11.4 2.8" fill="none" stroke="#444" stroke-width="1.5"/></svg>
<span class="t" style="left:308.3px;top:600px;font-size:12.4px;font-weight:400;color:#000;transform:scaleX(0.9832);transform-origin:0 0;">Open in a new ta<u>b</u></span>
<div class="cb" style="left:288px;top:624px"></div>
<span class="t" style="left:308.3px;top:624px;font-size:12.4px;font-weight:400;color:#000;transform:scaleX(0.9950);transform-origin:0 0;">Open in Timing Analysis layout</span>
<div class="a" style="left:287px;top:649px;width:23px;height:23px;box-sizing:border-box;border:1px solid #4a4a4a;border-radius:50%;background:#fff"></div>
<span class="t" style="left:294.2px;top:653px;font-size:15px;font-weight:700;color:#213a78;">?</span>
<div class="a" style="left:530px;top:649px;width:75px;height:26px;background:#4f7bd0"></div>
<span class="t" style="left:559.3px;top:655px;font-size:12.4px;font-weight:400;color:#fff;transform:scaleX(0.9438);transform-origin:0 0;">OK</span>
<div class="a" style="left:630px;top:649px;width:75px;height:26px;box-sizing:border-box;border:1px solid #555;background:#fff"></div>
<span class="t" style="left:648.3px;top:655px;font-size:12.4px;font-weight:400;color:#000;transform:scaleX(0.9876);transform-origin:0 0;">Cancel</span>
<svg class="a" style="left:0;top:0;pointer-events:none" width="1189" height="705" viewBox="0 0 1189 705" fill="none" stroke="#f00000" stroke-width="1.9" stroke-linecap="round" stroke-linejoin="round">
<path d="M214.5 259 C209 259.5 206 258.5 203 256 C197 250 195 244 195.2 237 C195.5 228 198 223 203 220 C208 217.5 213 216.8 218 217.5 C224 218 229 220 231.5 224 C234 229 234.2 234 232 240 C229 246 224 250 217 253.5 C212 256 208 257.5 205 258"/>
<path d="M213.8 227.5 C213 234 212.5 241 212.6 248"/>
<path d="M192.5 257.5 C184 270 176 282 167 296 M168 282 C167.5 287 167.2 291 167 296 C173 293.5 178 292 184 290"/>
<path d="M204 358 C199 350 195 341 194 332 C194 326 197 322.5 203 321 C210 319.5 218 318.5 226 319 C233 319.5 238 323 241 329 C243 334 243 341 242 346 C240 352 236 356 231 358 C225 361 217 361.5 210 360 C207 359.5 205 359 203 358"/>
<path d="M214 330.5 C217 327.5 222 326.5 225 329 C227 332 225.5 336.5 222 339.5 C218 343 213 345 207.5 346.5 C214 346.5 221 347.5 228 349"/>
<path d="M203 359 C194 366 186 375 179 385 M177 371 C177.5 376 178 380.5 179 385 C187 380.5 196 378 207 376.5"/>
<path d="M584 594.5 C596 594 610 593.5 618 596 C624 600 626 612 625.5 622 C625 632 622 642 617 647 C611 651 601 651.5 593 649.5 C587 645 585 630 584.5 615 C584 607 584 600 584.5 595"/>
<path d="M594 607.5 C599 605 606 605 609 608 C610.5 612 606 617 599 620 C605 620 609.5 623 609 629 C608 635 602 638 595.5 638.5"/>
<path d="M584 614 C574 628 566 642 560.5 657 M558 643 C558.5 648 559.5 652.5 560.5 657 C567 652 575 649 583 646.5"/>
</svg>

</body></html>
